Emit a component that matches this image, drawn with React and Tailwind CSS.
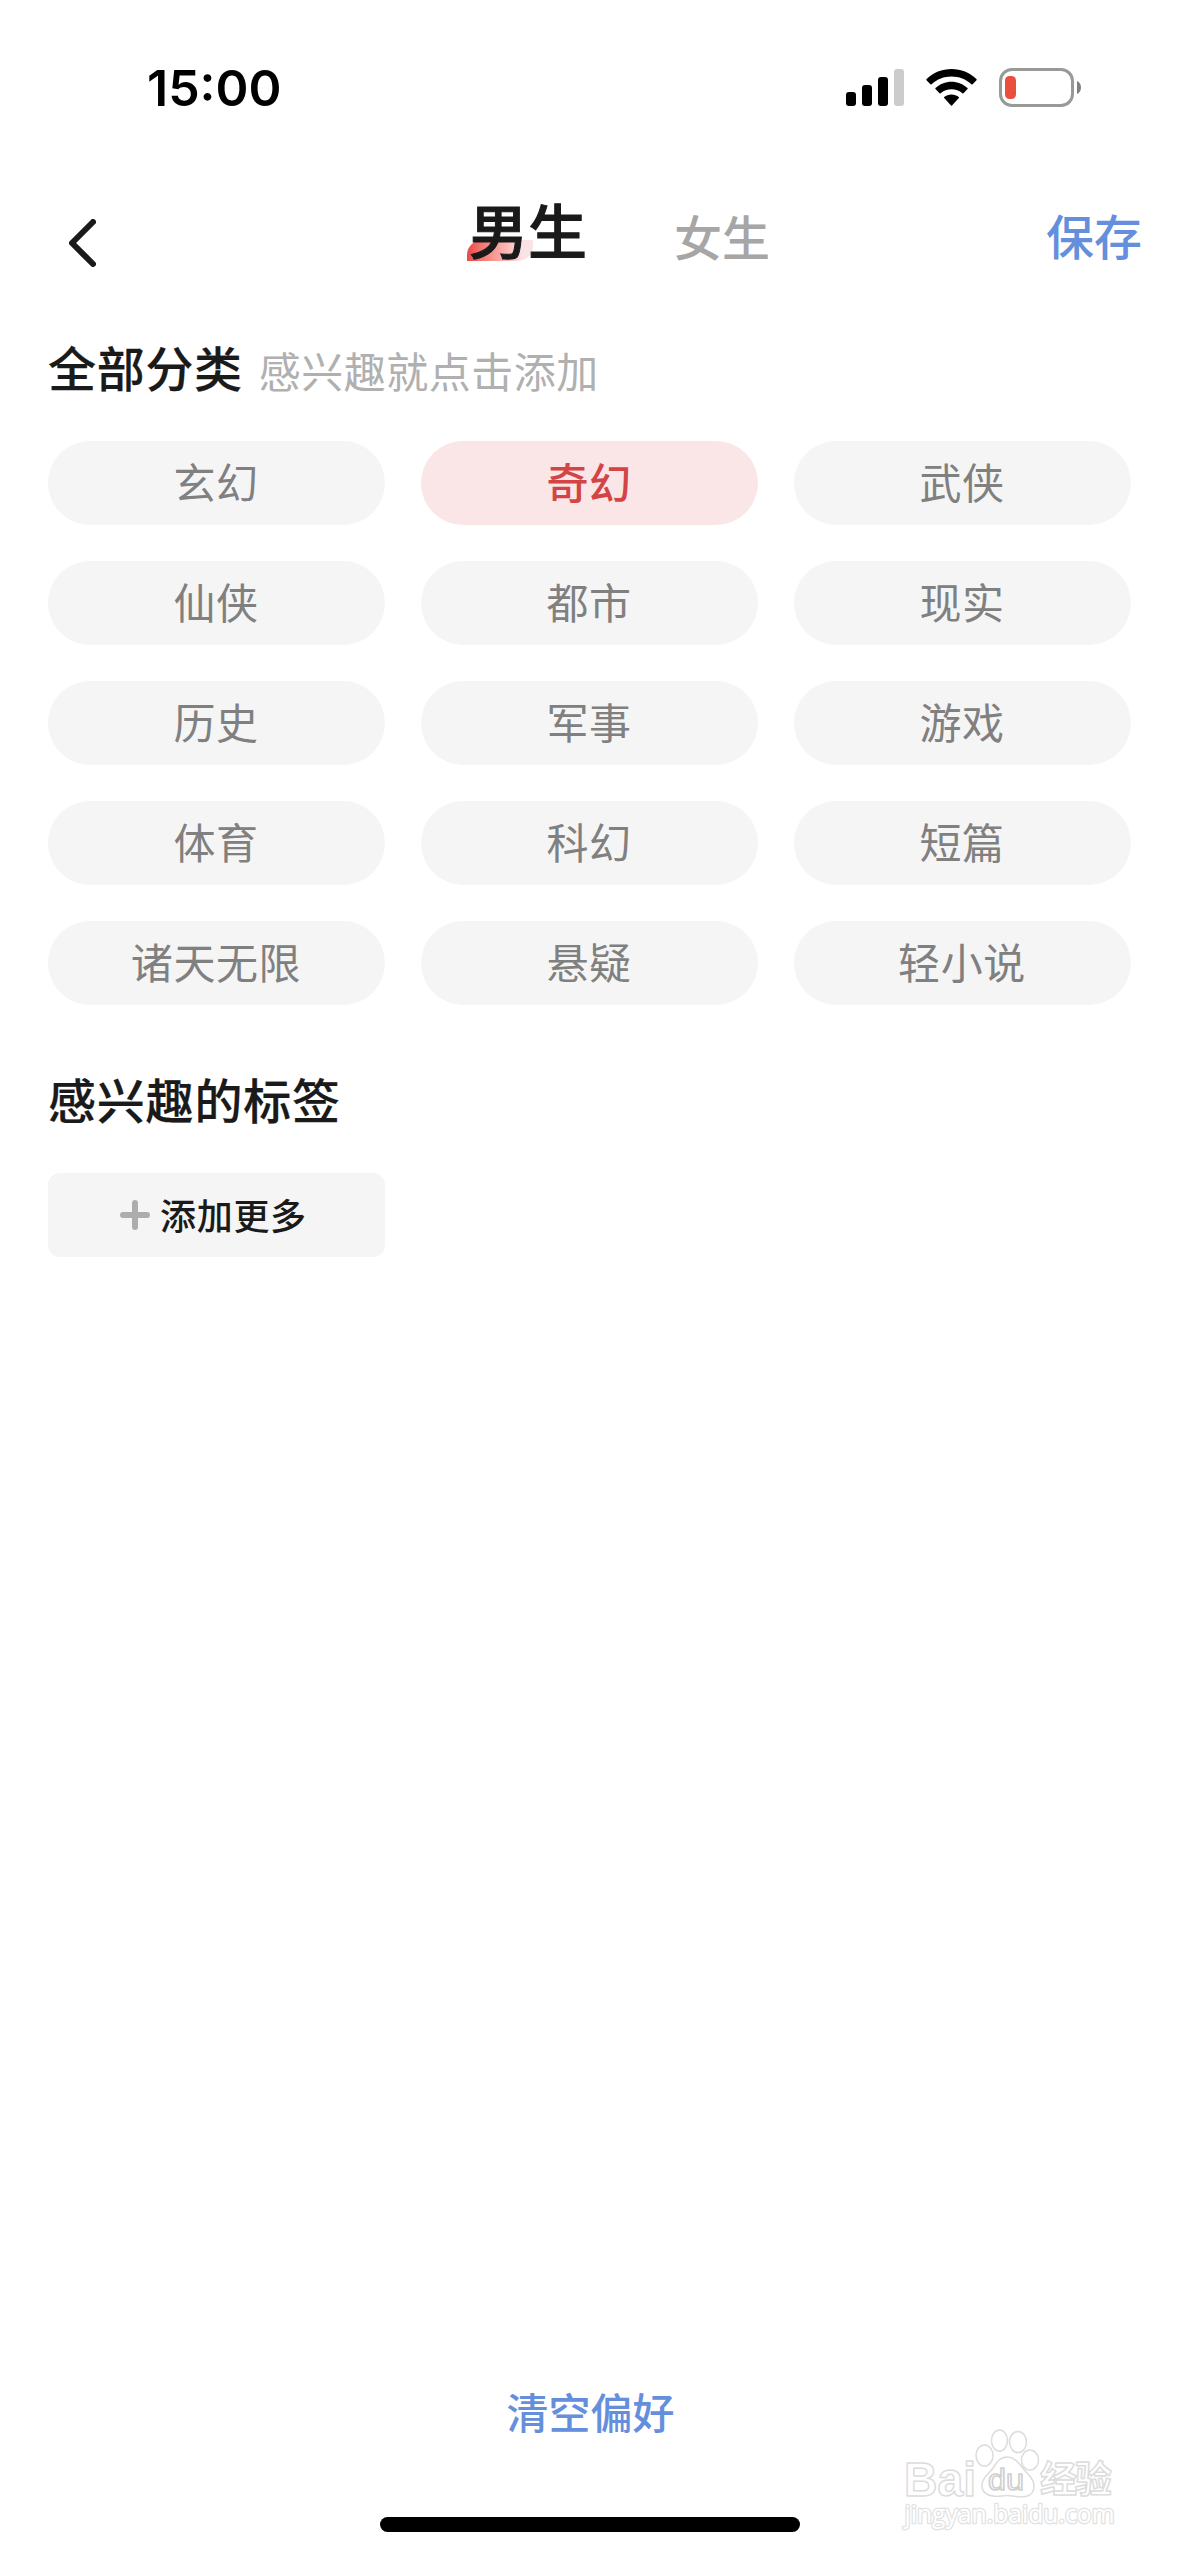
import React, { useState } from 'react';

const categories = [
  '玄幻', '奇幻', '武侠',
  '仙侠', '都市', '现实',
  '历史', '军事', '游戏',
  '体育', '科幻', '短篇',
  '诸天无限', '悬疑', '轻小说',
];

const StatusBar = () => (
  <div className="flex items-start justify-between h-[171px] pt-[68px] pl-[147px] pr-[97px]">
    <div className="font-['Inter','Noto_Sans_CJK_SC',sans-serif] font-semibold text-[50px] leading-[41px] text-black">
      15:00
    </div>
    <div className="flex items-start">
      {/* Cellular */}
      <svg className="w-[58px] h-[39px]" viewBox="0 0 58 39">
        <rect x="0" y="24" width="10" height="14" rx="3" fill="#000" />
        <rect x="16" y="17" width="10" height="21" rx="3" fill="#000" />
        <rect x="32" y="9" width="10" height="29" rx="3" fill="#000" />
        <rect x="48" y="1" width="10" height="37" rx="3" fill="#ccc" />
      </svg>
      {/* Wifi */}
      <svg className="w-[51px] h-[39px] ml-[22px]" viewBox="0 0 51 39" fill="#000">
        <path d="M25.5 1C35 1 43.8 4.6 50.4 11Q51 11.6 50.5 12.2L46.6 16.3Q46 16.8 45.4 16.3C40 11.3 33 8.6 25.5 8.6S11 11.3 5.6 16.3Q5 16.8 4.4 16.3L0.5 12.2Q0 11.6 0.6 11C7.2 4.6 16 1 25.5 1Z" />
        <path d="M25.5 13.7C31.6 13.7 37.2 16 41.5 20Q42 20.6 41.5 21.1L37.5 25.2Q37 25.7 36.4 25.2C33.4 22.7 29.6 21.3 25.5 21.3S17.6 22.7 14.6 25.2Q14 25.7 13.5 25.2L9.5 21.1Q9 20.6 9.5 20C13.8 16 19.4 13.7 25.5 13.7Z" />
        <path d="M25.5 26.4C28.3 26.4 30.8 27.3 32.8 29Q33.3 29.6 32.8 30.1L26 37.4Q25.5 38 25 37.4L18.2 30.1Q17.7 29.6 18.2 29C20.2 27.3 22.7 26.4 25.5 26.4Z" />
      </svg>
      {/* Battery */}
      <svg className="w-[83px] h-[39px] ml-[22px]" viewBox="0 0 83 39">
        <rect x="1.5" y="1.5" width="72" height="36" rx="11.5" fill="none" stroke="#999" strokeWidth="3" />
        <rect x="6" y="8" width="11" height="23" rx="4.5" fill="#eb4e3d" />
        <path d="M78 13C80.5 14 82 16.5 82 19.5S80.5 25 78 26Z" fill="#808080" />
      </svg>
    </div>
  </div>
);

const Header = ({ tab, onTab }) => (
  <div className="grid grid-cols-[467px_1fr_auto] h-[150px] pr-[37px] whitespace-nowrap">
    <button className="flex justify-start pl-[69px] pt-[48px]">
      <svg className="w-[27px] h-[48px]" viewBox="0 0 27 48" fill="none" stroke="#1a1a1a" strokeWidth="6" strokeLinecap="round" strokeLinejoin="round">
        <path d="M24 3L3 24L24 45" />
      </svg>
    </button>
    <div className="flex">
      <button onClick={() => onTab('male')} className="relative pl-[2px] pt-[26px] self-start">
        <span className="absolute left-0 top-[69px] w-[66px] h-[21px] rounded-tl-[15px] rounded-br-[15px] bg-linear-to-r from-[#e94848] to-[#fae3e5] to-85%" />
        <span className="relative block text-[59px] leading-[64px] font-medium text-[#1a1a1a] [-webkit-text-stroke:1px_#1a1a1a]">男生</span>
      </button>
      <button onClick={() => onTab('female')} className="pl-[87px] pt-[32px] self-start">
        <span className={tab === 'female' ? 'block text-[48px] leading-[64px] font-medium text-[#1a1a1a]' : 'block text-[48px] leading-[64px] font-medium text-[#a6a6a6]'}>女生</span>
      </button>
    </div>
    <button className="self-start pt-[31px] text-[48px] leading-[64px] font-medium text-[#658fdc]">保存</button>
  </div>
);

const Watermark = () => (
  <svg
    className="absolute left-[900px] top-[2425px] w-[225px] h-[110px]"
    viewBox="0 0 225 110"
    fill="#fff"
    stroke="#dcdcdc"
    strokeWidth="1.5"
    strokeLinejoin="round"
  >
    <ellipse cx="84.5" cy="30.5" rx="8.5" ry="10.5" />
    <ellipse cx="99.5" cy="15.5" rx="8" ry="10.5" />
    <ellipse cx="118" cy="17" rx="8.5" ry="10.5" />
    <ellipse cx="130" cy="35" rx="8.5" ry="10" />
    <path d="M107 32C114 32 118 37 122 42C127 49 134 53 134 61C134 69 128 72 121 72C116 72 112 70.5 107 70.5C102 70.5 98 72 93 71C86 70 81 67 82 59C83 52 89 49 93 43C97 37 100 32 107 32Z" />
    <text x="4" y="70.5" fontSize="48" fontWeight="700" fontFamily="Liberation Sans, sans-serif" textLength="72" lengthAdjust="spacingAndGlyphs">Bai</text>
    <text x="88" y="65" fontSize="29" fontFamily="Liberation Sans, sans-serif" stroke="#cfcfcf" textLength="36" lengthAdjust="spacingAndGlyphs">du</text>
    <text x="140" y="68" fontSize="37" fontWeight="700" fontFamily="Noto Sans CJK SC, sans-serif" textLength="72">经验</text>
    <text x="4.5" y="98" fontSize="25" fontFamily="Open Sans, sans-serif" stroke="#e2e2e2" strokeWidth="2.6" paintOrder="stroke" textLength="210" lengthAdjust="spacingAndGlyphs">jingyan.baidu.com</text>
  </svg>
);

const App = () => {
  const [tab, setTab] = useState('male');
  const [selected, setSelected] = useState('奇幻');

  return (
    <div className="relative flex flex-col w-[1179px] h-[2556px] overflow-hidden bg-white font-['Noto_Sans_CJK_SC',sans-serif]">
      <StatusBar />
      <Header tab={tab} onTab={setTab} />

      <div className="flex items-start h-[120px] pl-[48px] pt-[13px] whitespace-nowrap">
        <h2 className="text-[48px] leading-[64px] font-medium tracking-[0.7px] text-[#1a1a1a] [-webkit-text-stroke:0.2px_#1a1a1a]">全部分类</h2>
        <span className="ml-[16px] pt-[4px] text-[42px] leading-[64px] tracking-[0.5px] text-[#b0b0b0]">感兴趣就点击添加</span>
      </div>

      <div className="grid grid-cols-3 gap-9 px-12">
        {categories.map((name) => (
          <button
            key={name}
            onClick={() => setSelected(name)}
            className={
              name === selected
                ? 'h-[84px] rounded-full text-[42px] leading-[80px] pb-1 pr-[1px] tracking-[0.6px] bg-[#fae6e7] text-[#d34545] font-medium'
                : 'h-[84px] rounded-full text-[42px] leading-[80px] pb-1 pr-[1px] tracking-[0.6px] bg-[#f5f5f5] text-[#808080]'
            }
          >
            {name}
          </button>
        ))}
      </div>

      <h2 className="mt-[61px] pl-[48px] text-[48px] leading-[64px] font-medium tracking-[0.8px] text-[#1a1a1a] [-webkit-text-stroke:0.2px_#1a1a1a]">感兴趣的标签</h2>
      <button className="flex items-center ml-12 mt-[43px] w-[337px] h-[84px] pl-[72px] rounded-xl bg-[#f5f5f5]">
        <svg className="w-[30px] h-[30px]" viewBox="0 0 30 30" stroke="#adadad" strokeWidth="6" strokeLinecap="round">
          <path d="M15 3V27M3 15H27" />
        </svg>
        <span className="ml-[10px] pb-[3px] text-[36px] leading-[80px] font-medium tracking-[0.7px] text-[#1a1a1a]">添加更多</span>
      </button>

      <div className="mt-auto flex flex-col items-center pb-6">
        <button className="pl-[2px] text-[42px] leading-[64px] font-medium text-[#658fdc] mb-[74px]">清空偏好</button>
        <div className="w-[420px] h-[15px] rounded-full bg-black" />
      </div>

      <Watermark />
    </div>
  );
};

export default App;
